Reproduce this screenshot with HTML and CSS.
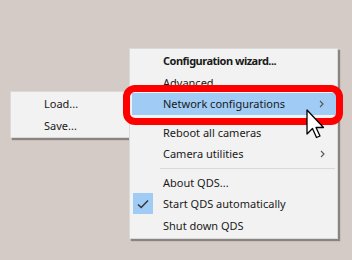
FILE: index.html
```html
<!DOCTYPE html>
<html lang="en">
  <head>
    <meta charset="UTF-8" />
    <title>QDS tray menu</title>
    <link rel="stylesheet" href="styles.css">
  </head>
  <body>
    <div class="desktop">
      <!-- Submenu: Network configurations -->
      <div class="menu submenu">
        <div class="item"><span class="label">Load...</span></div>
        <div class="item"><span class="label">Save...</span></div>
      </div>

      <!-- Main tray menu -->
      <div class="menu main-menu">
        <div class="item bold"><span class="label">Configuration wizard...</span></div>
        <div class="item"><span class="label">Advanced...</span></div>
        <div class="item active">
          <span class="label">Network configurations</span>
          <svg class="arrow" width="5" height="8" viewBox="0 0 5 8">
            <path d="M1 1 L4 4 L1 7" fill="none" stroke="#555" stroke-width="1.1" />
          </svg>
        </div>
        <div class="separator"></div>
        <div class="item"><span class="label">Reboot all cameras</span></div>
        <div class="item">
          <span class="label">Camera utilities</span>
          <svg class="arrow" width="5" height="8" viewBox="0 0 5 8">
            <path d="M1 1 L4 4 L1 7" fill="none" stroke="#555" stroke-width="1.1" />
          </svg>
        </div>
        <div class="separator"></div>
        <div class="item"><span class="label">About QDS...</span></div>
        <div class="item">
          <span class="check">
            <svg width="12" height="10" viewBox="0 0 12 10">
              <path d="M1 5.5 L4.2 8.5 L11 1.5" fill="none" stroke="#333" stroke-width="1.4" />
            </svg>
          </span>
          <span class="label">Start QDS automatically</span>
        </div>
        <div class="item"><span class="label">Shut down QDS</span></div>
      </div>

      <!-- Red annotation box -->
      <div class="callout"></div>

      <!-- Mouse pointer -->
      <svg class="pointer" width="20" height="30" viewBox="0 0 20 30">
        <path d="M1 1 L1 25 L6.5 19.5 L10.5 28.5 L14 27 L10 18.5 L17.5 18.5 Z"
              fill="#fff" stroke="#000" stroke-width="1.3" stroke-linejoin="round" />
      </svg>
    </div>
  </body>
</html>
```

FILE: styles.css
```css
body {
  margin: 0;
  background: #d4cbc6;
  font-family: "Segoe UI", "Noto Sans", sans-serif;
  font-size: 11px;
  color: #1a1a1a;
}
.desktop {
  position: relative;
  width: 352px;
  height: 260px;
  overflow: hidden;
}
.menu {
  position: absolute;
  background: #f2f2f2;
  border: 1px solid #dadada;
  box-shadow: 2px 2px 1px rgba(0, 0, 0, 0.35);
  box-sizing: border-box;
}
.main-menu {
  left: 129px;
  top: 48px;
  width: 209px;
  padding: 1px 0 2px;
}
.submenu {
  left: 10px;
  top: 91px;
  width: 120px;
  padding: 1px 0;
}
.item {
  position: relative;
  display: flex;
  align-items: center;
  height: 21.5px;
  padding-left: 33px;
}
.item.bold {
  font-weight: bold;
  letter-spacing: -0.5px;
}
.item.active {
  background: #9fcbf5;
  margin: 0 1px 0 2px;
  padding-left: 31px;
}
.label {
  line-height: 1;
}
.arrow {
  position: absolute;
  right: 12px;
  top: 7px;
}
.check {
  position: absolute;
  left: 3px;
  top: 0;
  width: 20px;
  height: 21px;
  background: #9fcbf5;
  display: flex;
  align-items: center;
  justify-content: center;
}
.separator {
  height: 1px;
  background: #d9d9d9;
  margin: 3px 2px 3px 30px;
}
.callout {
  position: absolute;
  left: 123px;
  top: 85px;
  width: 220px;
  height: 40px;
  border: 7px solid #ff0000;
  border-radius: 12px;
  box-sizing: border-box;
}
.pointer {
  position: absolute;
  left: 306px;
  top: 109px;
}
```
